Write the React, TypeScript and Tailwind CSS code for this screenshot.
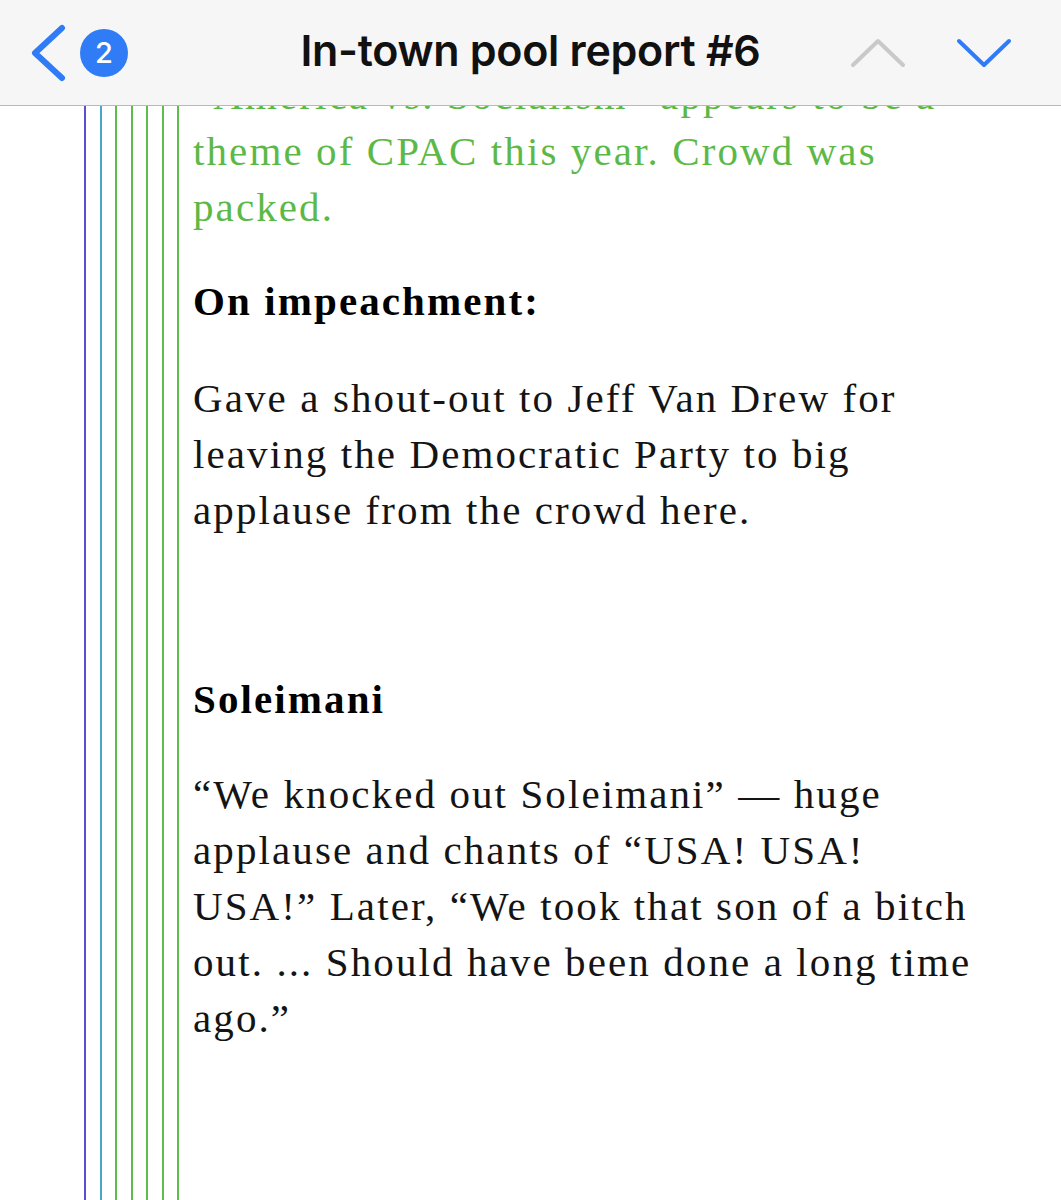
import React from "react";

const serif = { fontFamily: '"Liberation Serif", "Times New Roman", serif' };

// nested quote rails, outermost first
const rails = [
  { color: "border-[#5a4fd0]", pad: "pl-[14px]" },
  { color: "border-[#4ba4c9]", pad: "pl-[13px]" },
  { color: "border-[#5fbe4b]", pad: "pl-[14px]" },
  { color: "border-[#5fbe4b]", pad: "pl-[13px]" },
  { color: "border-[#5fbe4b]", pad: "pl-[14px]" },
  { color: "border-[#5fbe4b]", pad: "pl-[13px]" },
  { color: "border-[#5fbe4b]", pad: "pl-[14px]" },
];

function Rails({ depth, children }: { depth: number; children: React.ReactNode }) {
  if (depth >= rails.length) return <div className="flex-1 min-w-0">{children}</div>;
  const r = rails[depth];
  return (
    <div className={`flex flex-1 border-l-2 ${r.color} ${r.pad}`}>
      <Rails depth={depth + 1}>{children}</Rails>
    </div>
  );
}

function Header() {
  return (
    <header className="h-[106px] shrink-0 bg-[#f6f6f6] border-b border-[#b9b9b9] grid grid-cols-[1fr_auto_1fr] items-center">
      <div className="flex items-center pl-[30px] gap-[12px]">
        <svg width="38" height="58" viewBox="0 0 38 58" fill="none">
          <path d="M32 4 L5 29 L32 54" stroke="#2f7cf6" strokeWidth="6" strokeLinecap="round" strokeLinejoin="round" />
        </svg>
        <div className="w-[48px] h-[48px] rounded-full bg-[#2f7cf6] flex items-center justify-center text-white text-[29px] font-medium leading-none" style={{ fontFamily: "Inter, sans-serif" }}>
          2
        </div>
      </div>
      <h1 className="text-[43px] font-semibold text-[#111] tracking-[-0.3px] pb-[4px]" style={{ fontFamily: "Inter, sans-serif" }}>
        In-town pool report #6
      </h1>
      <div className="flex items-center justify-end pr-[49px] gap-[50px]">
        <svg width="56" height="32" viewBox="0 0 56 32" fill="none">
          <path d="M3 28 L28 4 L53 28" stroke="#c9c9c9" strokeWidth="4" strokeLinecap="round" strokeLinejoin="round" />
        </svg>
        <svg width="56" height="32" viewBox="0 0 56 32" fill="none">
          <path d="M3 4 L28 28 L53 4" stroke="#2f7cf6" strokeWidth="4" strokeLinecap="round" strokeLinejoin="round" />
        </svg>
      </div>
    </header>
  );
}

export default function App() {
  return (
    <div className="w-[1061px] h-[1200px] overflow-hidden bg-white flex flex-col">
      <Header />
      <main className="flex-1 flex overflow-hidden pl-[84px]">
        <Rails depth={0}>
          <div className="text-[41px] leading-[56px] tracking-[2.1px] text-[#141414] whitespace-nowrap" style={serif}>
            <p className="mt-[-39px] text-[#5cb948]">
              “America vs. Socialism” appears to be a<br />
              theme of CPAC this year. Crowd was<br />
              packed.
            </p>
            <p className="mt-[38px] font-bold text-black">On impeachment:</p>
            <p className="mt-[41px]">
              Gave a shout-out to Jeff Van Drew for<br />
              leaving the Democratic Party to big<br />
              applause from the crowd here.
            </p>
            <p className="mt-[38px] h-[56px]" />
            <p className="mt-[39px] font-bold text-black">Soleimani</p>
            <p className="mt-[39px]">
              “We knocked out Soleimani” — huge<br />
              applause and chants of “USA! USA!<br />
              USA!” Later, “We took that son of a bitch<br />
              out. ... Should have been done a long time<br />
              ago.”
            </p>
          </div>
        </Rails>
      </main>
    </div>
  );
}
